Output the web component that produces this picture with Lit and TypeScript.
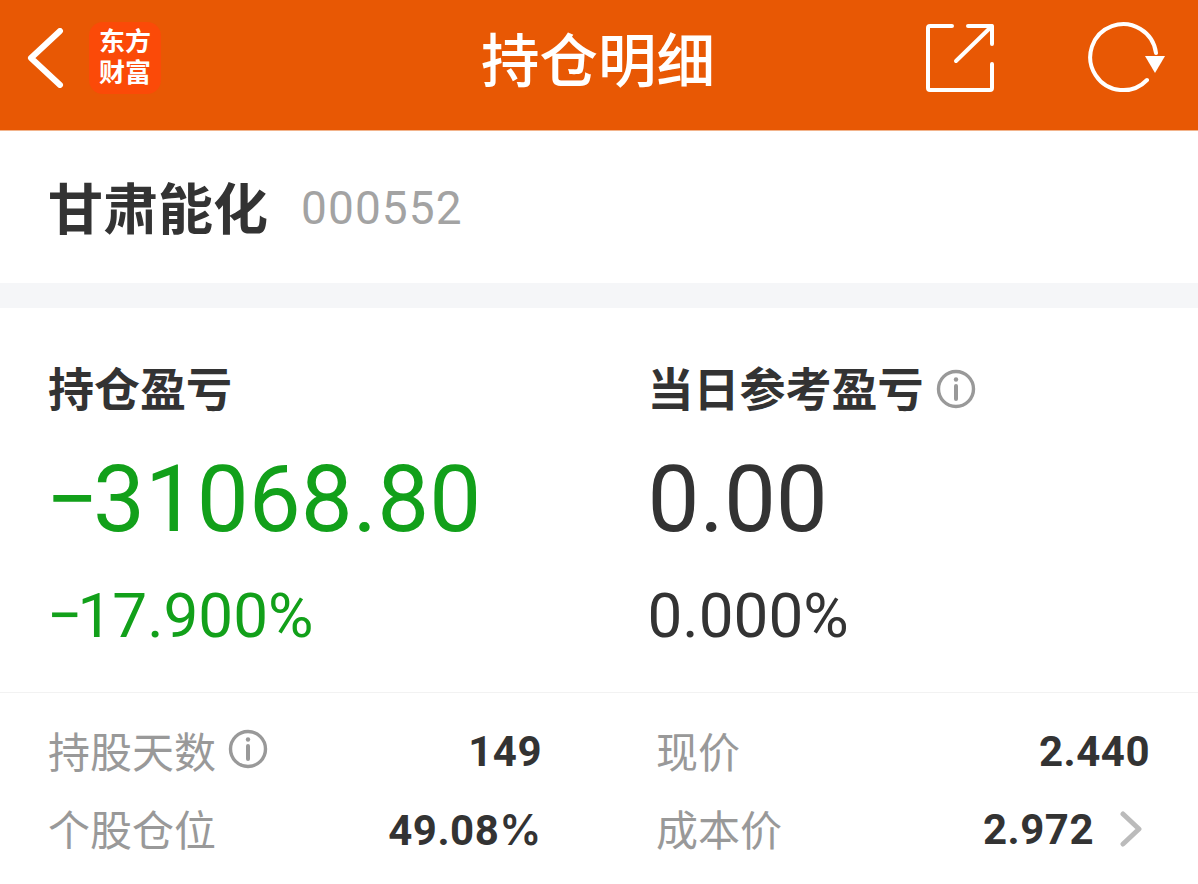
import { LitElement, html, css } from "lit";
import { customElement } from "lit/decorators.js";

const infoIcon = html`
  <svg class="info" viewBox="0 0 40 40" fill="none" stroke="#999" stroke-width="3.4">
    <circle cx="20" cy="20" r="17.5"></circle>
    <path d="M20 17v13" stroke-width="4" stroke-linecap="round"></path>
    <circle cx="20" cy="10.5" r="2.2" fill="#999" stroke="none"></circle>
  </svg>
`;

@customElement("app-root")
export class AppRoot extends LitElement {
  static override styles = css`
    :host {
      display: block;
      width: 1198px;
      height: 884px;
      overflow: hidden;
      background: #fff;
      color: #333;
      font-family: Roboto, "Noto Sans CJK SC", sans-serif;
    }

    .header {
      height: 131px;
      box-sizing: border-box;
      background: #e85804;
      border-bottom: 1px solid #f2b48c;
      display: grid;
      grid-template-columns: 1fr auto 1fr;
      align-items: center;
      padding: 0 32px 14px 27px;
    }

    .header-left,
    .header-right {
      display: flex;
      align-items: center;
    }

    .header-right {
      justify-content: flex-end;
    }

    .back {
      width: 38px;
      height: 60px;
    }

    .logo {
      width: 72px;
      height: 72px;
      margin-left: 24px;
      box-sizing: border-box;
      border-radius: 14px;
      background: #fb4a08;
      color: #fff;
      font-size: 26px;
      font-weight: 700;
      line-height: 31px;
      display: flex;
      flex-direction: column;
      align-items: center;
      justify-content: center;
    }

    .title {
      color: #fff;
      font-family: "Noto Sans CJK SC", sans-serif;
      font-size: 58.5px;
      font-weight: 500;
      line-height: 76px;
      margin: -3px 0 0 3px;
    }

    .share {
      width: 70px;
      height: 70px;
      margin-right: 93px;
    }

    .refresh {
      width: 78px;
      height: 75px;
    }

    .stock {
      height: 152px;
      padding: 0 48px 4px;
      box-sizing: border-box;
      display: flex;
      align-items: center;
      gap: 33px;
    }

    .stock-name {
      font-family: "Noto Sans CJK SC", sans-serif;
      font-size: 55px;
      font-weight: 700;
    }

    .stock-code {
      color: #a3a3a3;
      font-size: 46px;
      letter-spacing: 1.1px;
      margin-top: 6px;
    }

    .gap {
      height: 25px;
      background: #f5f6f8;
    }

    .pnl {
      display: grid;
      grid-template-columns: 599.5px 1fr;
      padding: 50px 48px 0;
      box-sizing: border-box;
      border-bottom: 1px solid #f2f2f2;
      height: 385px;
    }

    .pnl-title {
      font-family: "Noto Sans CJK SC", sans-serif;
      font-size: 46px;
      font-weight: 700;
      line-height: 56px;
      display: flex;
      align-items: center;
      gap: 12px;
    }

    .pnl-title .info {
      margin-top: 5px;
    }

    .pnl-value {
      font-size: 92.5px;
      line-height: 108px;
      margin-top: 32px;
    }

    .pnl-value .minus {
      letter-spacing: -6px;
      margin-left: -2px;
    }

    .pnl-rate {
      font-size: 62px;
      line-height: 70px;
      margin-top: 27px;
    }

    .pnl-rate .minus {
      letter-spacing: -5px;
      margin-left: -1px;
    }

    .green {
      color: #12a01a;
    }

    .info {
      width: 40px;
      height: 40px;
      flex: none;
    }

    .stats {
      display: grid;
      grid-template-columns: 493px 493px;
      column-gap: 115px;
      row-gap: 18px;
      padding: 26px 48px 0;
    }

    .stat {
      display: flex;
      align-items: center;
      height: 60px;
    }

    .stat-label {
      color: #999;
      font-family: "Noto Sans CJK SC", sans-serif;
      font-size: 42px;
      display: flex;
      align-items: center;
      gap: 12px;
    }

    .stat-value {
      margin-left: auto;
      margin-right: -1px;
      margin-top: 4px;
      font-size: 42px;
      font-weight: 700;
      letter-spacing: 0.5px;
    }

    .pct {
      font-family: Inter, Roboto, sans-serif;
      font-weight: 600;
    }

    .chevron {
      width: 24px;
      height: 36px;
      margin-left: 26px;
      margin-right: 6px;
      margin-top: 4px;
    }
  `;

  override render() {
    return html`
      <div class="header">
        <div class="header-left">
          <svg class="back" viewBox="0 0 38 60" fill="none" stroke="#fff" stroke-width="6" stroke-linecap="round" stroke-linejoin="round">
            <path d="M33 3 4 30l29 27"></path>
          </svg>
          <div class="logo"><span>东方</span><span>财富</span></div>
        </div>
        <div class="title">持仓明细</div>
        <div class="header-right">
          <svg class="share" viewBox="0 0 70 70" fill="none" stroke="#fff" stroke-width="4" stroke-linecap="round" stroke-linejoin="round">
            <path d="M27 3H5a2 2 0 0 0-2 2v60a2 2 0 0 0 2 2h60a2 2 0 0 0 2-2V41"></path>
            <path d="M31 38 67 3M43 3h24v18"></path>
          </svg>
          <svg class="refresh" viewBox="0 0 78 75" fill="none" stroke="#fff" stroke-width="4" stroke-linecap="round">
            <path d="M59 59A33 33 0 1 1 68 32"></path>
            <path d="M57 35h20L67 52z" fill="#fff" stroke="none"></path>
          </svg>
        </div>
      </div>
      <div class="stock">
        <span class="stock-name">甘肃能化</span>
        <span class="stock-code">000552</span>
      </div>
      <div class="gap"></div>
      <div class="pnl">
        <div>
          <div class="pnl-title">持仓盈亏</div>
          <div class="pnl-value green"><span class="minus">−</span>31068.80</div>
          <div class="pnl-rate green"><span class="minus">−</span>17.900%</div>
        </div>
        <div>
          <div class="pnl-title">当日参考盈亏 ${infoIcon}</div>
          <div class="pnl-value">0.00</div>
          <div class="pnl-rate">0.000%</div>
        </div>
      </div>
      <div class="stats">
        <div class="stat">
          <span class="stat-label">持股天数 ${infoIcon}</span>
          <span class="stat-value">149</span>
        </div>
        <div class="stat">
          <span class="stat-label">现价</span>
          <span class="stat-value">2.440</span>
        </div>
        <div class="stat">
          <span class="stat-label">个股仓位</span>
          <span class="stat-value">49.08<span class="pct">%</span></span>
        </div>
        <div class="stat">
          <span class="stat-label">成本价</span>
          <span class="stat-value">2.972</span>
          <svg class="chevron" viewBox="0 0 24 36" fill="none" stroke="#bbb" stroke-width="5" stroke-linecap="round" stroke-linejoin="round">
            <path d="M4 3l16 15L4 33"></path>
          </svg>
        </div>
      </div>
    `;
  }
}
